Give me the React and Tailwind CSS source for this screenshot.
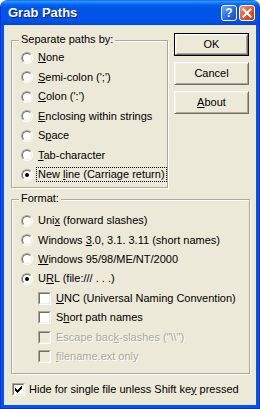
import React from 'react';

const FONT = "font-['Liberation_Sans',Arial,sans-serif]";

function Radio({ checked }) {
  return (
    <span className="w-[12px] h-[12px] rounded-full border border-t-[#ACA899] border-l-[#ACA899] border-r-white border-b-white flex shrink-0">
      <span className="flex-1 rounded-full border border-t-[#716F64] border-l-[#716F64] border-r-[#F1EFE2] border-b-[#F1EFE2] bg-white flex items-center justify-center">
        {checked && <span className="w-[4px] h-[4px] rounded-full bg-black" />}
      </span>
    </span>
  );
}

function Check({ checked, disabled }) {
  return (
    <span className="w-[13px] h-[13px] border border-t-[#ACA899] border-l-[#ACA899] border-r-white border-b-white flex shrink-0">
      <span
        className={`flex-1 border border-t-[#716F64] border-l-[#716F64] border-r-[#F1EFE2] border-b-[#F1EFE2] flex items-center justify-center ${
          disabled ? 'bg-[#ECE9D8]' : 'bg-white'
        }`}
      >
        {checked && (
          <svg width="7" height="7" viewBox="0 0 7 7" shapeRendering="crispEdges">
            <path
              fill="#000"
              d="M6 0h1v1h-1z M5 1h2v1h-2z M0 2h1v1h-1z M4 2h3v1h-3z M0 3h2v1h-2z M3 3h3v1h-3z M0 4h5v1h-5z M1 5h3v1h-3z M2 6h1v1h-1z"
            />
          </svg>
        )}
      </span>
    </span>
  );
}

function Btn({ children, def }) {
  const bevel =
    'flex items-center justify-center border border-t-white border-l-white border-r-[#716F64] border-b-[#716F64] shadow-[inset_1px_1px_0_#F1EFE2,inset_-1px_-1px_0_#ACA899]';
  if (def) {
    return (
      <div className="h-[23px] w-[75px] border border-black flex">
        <div className={`flex-1 ${bevel}`}>{children}</div>
      </div>
    );
  }
  return <div className={`h-[23px] w-[75px] ${bevel}`}>{children}</div>;
}

function Group({ label, className, children }) {
  return (
    <div className={`relative border border-[#ACA899] shadow-[inset_1px_1px_0_#fff,1px_1px_0_#fff] ${className}`}>
      <span className="absolute -top-[8px] left-[7px] px-[2px] bg-[#ECE9D8] leading-[13px]">{label}</span>
      {children}
    </div>
  );
}

const DIS = 'text-[#ACA899] [text-shadow:1px_1px_0_#fff]';

export default function App() {
  const sep = [
    [<><u>N</u>one</>],
    [<><u>S</u>emi-colon (';')</>],
    [<><u>C</u>olon (':')</>],
    [<><u>E</u>nclosing within strings</>],
    [<>S<u>p</u>ace</>],
    [<><u>T</u>ab-character</>],
  ];

  return (
    <div className={`w-[260px] h-[409px] rounded-t-[7px] overflow-hidden flex flex-col ${FONT}`}>
      {/* title bar */}
      <div className="h-[25px] shrink-0 flex items-center pl-[7px] pr-[5px] bg-[linear-gradient(180deg,#0058EE_0px,#3A93FF_1px,#288EFF_2px,#127DFF_3px,#036FFC_4px,#0262EE_5px,#0057E5_7px,#0054E3_10px,#0055EB_18px,#0050E2_22px,#0046D6_25px)] border-x border-[#0831D9]">
        <span className="text-white font-bold text-[13px] leading-[15px] [text-shadow:1px_1px_0_#0A1883]">Grab Paths</span>
        <div className="ml-auto flex gap-[2px] -mr-[1px]">
          <div className="w-[16px] h-[16px] rounded-[3px] border border-white bg-[linear-gradient(135deg,#6DA6FF,#2A68E6_55%,#1B4CC4)] flex items-center justify-center text-white font-bold text-[12px] leading-[12px]">
            ?
          </div>
          <div className="w-[16px] h-[16px] rounded-[3px] border border-white bg-[linear-gradient(135deg,#F29A7C,#E2532A_55%,#C23A12)] flex items-center justify-center">
            <svg width="14" height="14" viewBox="0 0 14 14">
              <path d="M3.5 3.5L10.5 10.5M10.5 3.5L3.5 10.5" stroke="#fff" strokeWidth="2" strokeLinecap="square" />
            </svg>
          </div>
        </div>
      </div>

      {/* frame */}
      <div className="flex-1 flex flex-col px-[3px] pb-[3px] bg-[#0652E2] border-x border-b border-[#0831D9]">
        <div className="flex-1 bg-[#ECE9D8] flex flex-col pl-[7px] pt-[8px] text-[11px] leading-[13px] text-black">
          <div className="flex items-start">
            <Group label="Separate paths by:" className="w-[157px] h-[148px] mt-[7px]">
              <div className="flex flex-col pt-[7px] pl-[9px]">
                {sep.map(([t], i) => (
                  <div key={i} className="h-[19.5px] flex items-center gap-[5px]">
                    <Radio />
                    <span>{t}</span>
                  </div>
                ))}
                <div className="h-[19.5px] flex items-center gap-[5px]">
                  <Radio checked />
                  <span className="-ml-[2px] px-[1px] border border-dotted border-black">
                    New <u>l</u>ine (Carriage return)
                  </span>
                </div>
              </div>
            </Group>
            <div className="ml-[6px] flex flex-col gap-[6px]">
              <Btn def>OK</Btn>
              <Btn>Cancel</Btn>
              <Btn>
                <span>
                  <u>A</u>bout
                </span>
              </Btn>
            </div>
          </div>

          <Group label="Format:" className="w-[239px] h-[175px] mt-[11px]">
            <div className="flex flex-col pt-[11px] pl-[9px]">
              <div className="h-[19.4px] flex items-center gap-[5px]">
                <Radio />
                <span>
                  Uni<u>x</u> (forward slashes)
                </span>
              </div>
              <div className="h-[19.4px] flex items-center gap-[5px]">
                <Radio />
                <span>
                  Windows <u>3</u>.0, 3.1. 3.11 (short names)
                </span>
              </div>
              <div className="h-[19.4px] flex items-center gap-[5px]">
                <Radio />
                <span>
                  <u>W</u>indows 95/98/ME/NT/2000
                </span>
              </div>
              <div className="h-[19.4px] flex items-center gap-[5px]">
                <Radio checked />
                <span>
                  U<u>R</u>L (file:/// . . .)
                </span>
              </div>
              <div className="h-[19.4px] flex items-center gap-[5px] pl-[17px]">
                <Check />
                <span>
                  <u>U</u>NC (Universal Naming Convention)
                </span>
              </div>
              <div className="h-[19.4px] flex items-center gap-[5px] pl-[17px]">
                <Check />
                <span>
                  S<u>h</u>ort path names
                </span>
              </div>
              <div className="h-[19.4px] flex items-center gap-[5px] pl-[17px]">
                <Check disabled />
                <span className={DIS}>
                  Escape bac<u>k</u>-slashes ("\\")
                </span>
              </div>
              <div className="h-[19.4px] flex items-center gap-[5px] pl-[17px]">
                <Check disabled />
                <span className={DIS}>
                  <u>f</u>ilename.ext only
                </span>
              </div>
            </div>
          </Group>

          <div className="mt-[7px] ml-[1px] h-[16px] flex items-center gap-[4px]">
            <Check checked />
            <span>
              Hide for single file unless Shift ke<u>y</u> pressed
            </span>
          </div>
        </div>
      </div>
    </div>
  );
}
